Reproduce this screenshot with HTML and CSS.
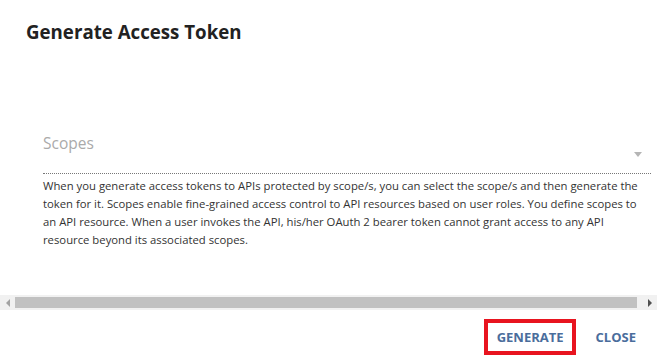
FILE: index.html
```html
<!DOCTYPE html>
<html lang="en">

<head>
  <meta charset="UTF-8" />
  <title>Generate Access Token</title>
  <link rel="stylesheet" href="styles.css">
</head>

<body>
  <div class="dialog">
    <div class="dialog-title">Generate Access Token</div>
    <div class="dialog-content">
      <div class="field">
        <div class="select">
          <span class="placeholder">Scopes</span>
          <span class="arrow"></span>
        </div>
        <div class="helper">
          When you generate access tokens to APIs protected by scope/s, you can select the scope/s and then generate the
          token for it. Scopes enable fine-grained access control to API resources based on user roles. You define scopes to
          an API resource. When a user invokes the API, his/her OAuth 2 bearer token cannot grant access to any API
          resource beyond its associated scopes.
        </div>
      </div>
    </div>
    <div class="hscroll">
      <div class="scroll-btn"><span class="tri-left"></span></div>
      <div class="scroll-track"><div class="scroll-thumb"></div></div>
      <div class="scroll-btn"><span class="tri-right"></span></div>
    </div>
    <div class="dialog-actions">
      <button class="action highlighted">Generate</button>
      <button class="action">Close</button>
    </div>
  </div>
</body>

</html>
```

FILE: styles.css
```css
body {
  margin: 0;
  background-color: #ffffff;
  font-family: "Open Sans", "Liberation Sans", sans-serif;
  color: #222222;
}

.dialog {
  width: 657px;
  height: 364px;
  display: flex;
  flex-direction: column;
  overflow: hidden;
}

.dialog-title {
  padding: 18px 26px 0 26px;
  height: 46px;
  box-sizing: border-box;
  font-size: 18.7px;
  font-weight: 700;
  line-height: 28px;
  color: #222222;
}

.dialog-content {
  flex: 1;
  padding: 84px 0 0 43px;
}

.field {
  width: 608px;
}

.select {
  display: flex;
  justify-content: space-between;
  align-items: center;
  height: 40px;
  padding-top: 3px;
  border-bottom: 1px dotted #777777;
}

.placeholder {
  font-size: 15.5px;
  color: #aaaaaa;
  margin-top: -20px;
}

.arrow {
  width: 0;
  height: 0;
  border-left: 4.5px solid transparent;
  border-right: 4.5px solid transparent;
  border-top: 5px solid #b5b5b5;
  margin-right: 9px;
  margin-top: 3px;
}

.helper {
  width: 600px;
  padding-top: 3px;
  font-size: 11.3px;
  line-height: 18px;
  color: #333333;
}

.hscroll {
  display: flex;
  height: 15px;
  background-color: #f1f1f1;
}

.scroll-btn {
  width: 15px;
  display: flex;
  align-items: center;
  justify-content: center;
}

.tri-left {
  border-top: 4px solid transparent;
  border-bottom: 4px solid transparent;
  border-right: 4px solid #a3a3a3;
}

.tri-right {
  border-top: 4px solid transparent;
  border-bottom: 4px solid transparent;
  border-left: 4px solid #505050;
}

.scroll-track {
  flex: 1;
  display: flex;
  align-items: center;
  padding-right: 5px;
}

.scroll-thumb {
  flex: 1;
  height: 11px;
  background-color: #c1c1c1;
}

.dialog-actions {
  height: 54px;
  display: flex;
  justify-content: flex-end;
  align-items: center;
  gap: 9px;
  padding-right: 10px;
}

.action {
  background: none;
  border: 4px solid transparent;
  font-family: "Open Sans", "Liberation Sans", sans-serif;
  font-size: 13px;
  font-weight: 700;
  text-transform: uppercase;
  color: #4a6d9c;
  height: 36px;
  padding: 0 7px;
  cursor: pointer;
}

.highlighted {
  border-color: #e8141f;
  padding: 0 8px 0 9px;
}
```
